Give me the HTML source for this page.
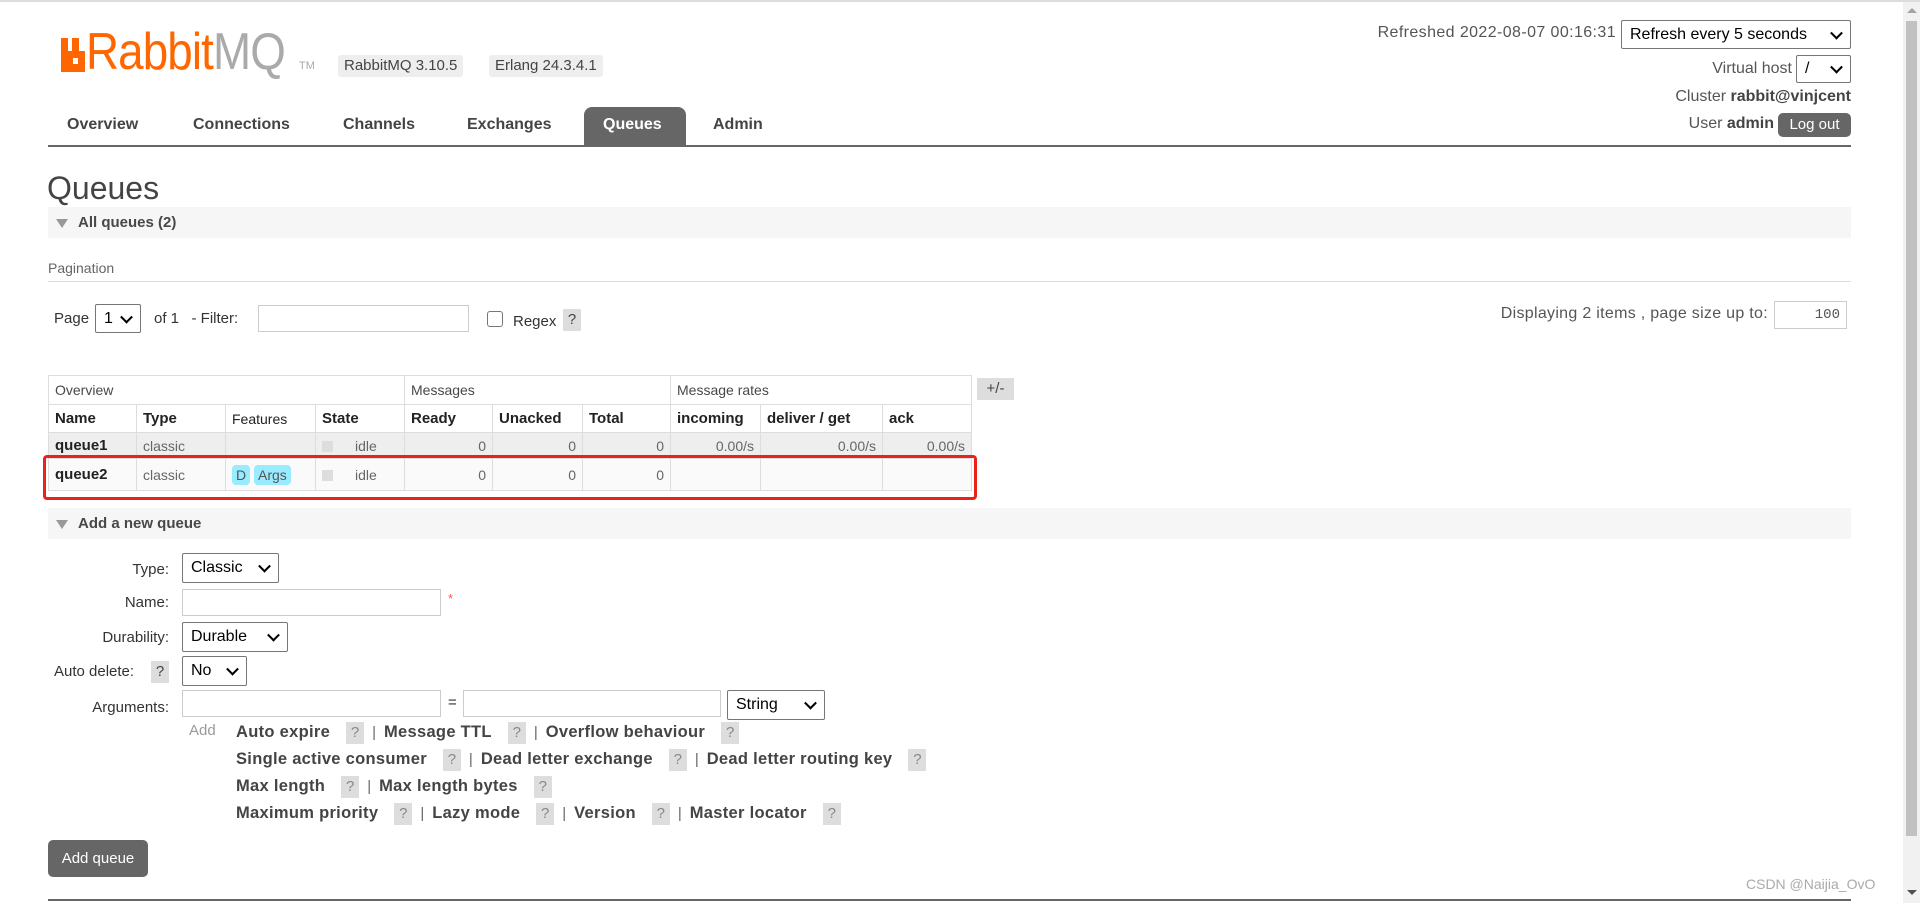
<!DOCTYPE html>
<html><head><meta charset="utf-8"><style>
*{box-sizing:border-box;margin:0;padding:0}
body{width:1920px;height:903px;overflow:hidden;background:#fff;font-family:"Liberation Sans",Arial,sans-serif;color:#484848;position:relative;font-size:15px}
.a{position:absolute;white-space:nowrap}
.sel{position:absolute;border:1px solid #767676;border-radius:2px;background:#fff;color:#000;font-size:16px;padding-left:8px;display:flex;align-items:center}
.sel:after{content:"";position:absolute;right:9px;top:50%;width:7px;height:7px;border-right:2px solid #000;border-bottom:2px solid #000;transform:translateY(-70%) rotate(45deg)}
.inp{position:absolute;border:1px solid #ccc;background:#fff}
.bar{position:absolute;left:48px;width:1803px;background:#f6f6f6;font-weight:bold;font-size:15px;color:#484848;padding-left:30px}
.bar:before{content:"";position:absolute;left:8px;top:50%;margin-top:-4px;border-left:6px solid transparent;border-right:6px solid transparent;border-top:9px solid #999}
table{position:absolute;left:48px;top:375px;border-collapse:collapse;font-size:15px}
td,th{border:1px solid #ddd;padding:0 6px;text-align:left;white-space:nowrap}
.q{position:absolute;background:#ddd;color:#888;width:18px;height:22px;text-align:center;line-height:22px;font-size:15px}
.lk{font-weight:bold;color:#444;font-size:16.5px;letter-spacing:0.3px}
.sep{color:#666;margin:0 8px}
.qi{position:static!important;display:inline-block;margin-left:16px;font-weight:normal}
</style></head><body>
<div class="a" style="left:0;top:0;width:1920px;height:2px;background:#ddd"></div>
<div class="a" style="left:1903px;top:2px;width:17px;height:901px;background:#f1f1f1"></div>
<div class="a" style="left:1906px;top:21px;width:11px;height:815px;background:#c1c1c1"></div>
<div class="a" style="left:1907px;top:8px;border-left:5px solid transparent;border-right:5px solid transparent;border-bottom:5px solid #a3a3a3"></div>
<div class="a" style="left:1907px;top:890px;border-left:5px solid transparent;border-right:5px solid transparent;border-top:5px solid #505050"></div>

<svg class="a" style="left:61px;top:38px" width="24" height="34" viewBox="0 0 24 34"><path d="M0 0h7v13h4V0h7v13h6v21H0z M12 20v6h5v-6z" fill="#f60" fill-rule="evenodd"/></svg>
<div class="a" style="left:86px;top:22px;font-size:52px;letter-spacing:-1px;color:#f60;transform:scaleX(0.88);transform-origin:0 0">Rabbit<span style="color:#aaa">MQ</span></div>
<div class="a" style="left:299px;top:60px;font-size:11px;color:#aaa">TM</div>
<div class="a" style="left:338px;top:55px;height:22px;padding:0 6px;background:#eee;border-radius:3px;font-size:15px;line-height:22px;color:#444">RabbitMQ 3.10.5</div>
<div class="a" style="left:489px;top:55px;height:22px;padding:0 6px;background:#eee;border-radius:3px;font-size:15px;line-height:22px;color:#444">Erlang 24.3.4.1</div>

<div class="a" style="left:48px;top:145px;width:1803px;height:2px;background:#666"></div>
<div class="a" style="left:584px;top:107px;width:102px;height:39px;background:#666;border-radius:8px 8px 0 0"></div>
<div class="a" style="top:116px;left:67px;font-weight:bold;font-size:16px;color:#444">Overview</div>
<div class="a" style="top:116px;left:193px;font-weight:bold;font-size:16px;color:#444">Connections</div>
<div class="a" style="top:116px;left:343px;font-weight:bold;font-size:16px;color:#444">Channels</div>
<div class="a" style="top:116px;left:467px;font-weight:bold;font-size:16px;color:#444">Exchanges</div>
<div class="a" style="top:116px;left:603px;font-weight:bold;font-size:16px;color:#fff">Queues</div>
<div class="a" style="top:116px;left:713px;font-weight:bold;font-size:16px;color:#444">Admin</div>

<div class="a" style="right:304px;top:24px;font-size:16px;letter-spacing:0.4px;color:#555">Refreshed 2022-08-07 00:16:31</div>
<div class="sel" style="left:1621px;top:20px;width:230px;height:29px">Refresh every 5 seconds</div>
<div class="a" style="right:128px;top:60px;font-size:16px;color:#555">Virtual host</div>
<div class="sel" style="left:1796px;top:55px;width:55px;height:28px">/</div>
<div class="a" style="right:69px;top:88px;font-size:16px;color:#555">Cluster <b style="color:#444">rabbit@vinjcent</b></div>
<div class="a" style="right:146px;top:115px;font-size:16px;color:#555">User <b style="color:#444">admin</b></div>
<div class="a" style="left:1778px;top:113px;width:73px;height:24px;background:#666;color:#fff;border-radius:5px;font-size:15px;text-align:center;line-height:24px">Log out</div>

<div class="a" style="left:47px;top:170px;font-size:32px;color:#444">Queues</div>
<div class="bar" style="top:207px;height:31px;line-height:31px">All queues (2)</div>

<div class="a" style="left:48px;top:260px;font-size:14px;color:#666">Pagination</div>
<div class="a" style="left:48px;top:281px;width:1803px;height:1px;background:#ddd"></div>

<div class="a" style="left:54px;top:310px;font-size:15px;color:#333">Page</div>
<div class="sel" style="left:95px;top:304px;width:46px;height:29px">1</div>
<div class="a" style="left:154px;top:310px;font-size:15px;color:#333">of 1 &nbsp;&nbsp;- Filter:</div>
<div class="inp" style="left:258px;top:305px;width:211px;height:27px"></div>
<div class="a" style="left:487px;top:311px;width:16px;height:16px;border:1px solid #767676;border-radius:3px"></div>
<div class="a" style="left:513px;top:313px;font-size:15px;color:#333">Regex</div>
<div class="q" style="left:563px;top:309px;color:#444">?</div>
<div class="a" style="right:152px;top:305px;font-size:16px;letter-spacing:0.3px;color:#555">Displaying 2 items , page size up to:</div>
<div class="inp" style="left:1774px;top:301px;width:73px;height:28px;text-align:right;padding-right:6px;font-family:'Liberation Mono',monospace;font-size:14px;line-height:26px;color:#555">100</div>

<table>
<tr style="height:29px;font-size:14px"><td colspan="4" style="width:356px">Overview</td><td colspan="3">Messages</td><td colspan="3">Message rates</td></tr>
<tr style="height:28px;font-weight:bold;color:#222"><td style="width:88px">Name</td><td style="width:89px">Type</td><td style="width:90px;font-weight:normal;font-size:14px">Features</td><td style="width:89px">State</td><td style="width:88px">Ready</td><td style="width:90px">Unacked</td><td style="width:88px">Total</td><td style="width:90px">incoming</td><td style="width:122px">deliver / get</td><td style="width:89px">ack</td></tr>
<tr style="height:26px;background:#eee;color:#666;font-size:14px"><td style="font-weight:bold;color:#222;font-size:15px">queue1</td><td>classic</td><td></td><td><span style="display:inline-block;width:11px;height:11px;background:#ddd;vertical-align:middle;margin-right:22px"></span>idle</td><td style="text-align:right">0</td><td style="text-align:right">0</td><td style="text-align:right">0</td><td style="text-align:right">0.00/s</td><td style="text-align:right">0.00/s</td><td style="text-align:right">0.00/s</td></tr>
<tr style="height:32px;background:#fafafa;color:#666;font-size:14px"><td style="font-weight:bold;color:#222;font-size:15px">queue2</td><td>classic</td><td><span style="background:#99ebff;border-radius:4px;padding:2px 4px;color:#555">D</span> <span style="background:#99ebff;border-radius:4px;padding:2px 4px;color:#555">Args</span></td><td><span style="display:inline-block;width:11px;height:11px;background:#ddd;vertical-align:middle;margin-right:22px"></span>idle</td><td style="text-align:right">0</td><td style="text-align:right">0</td><td style="text-align:right">0</td><td></td><td></td><td></td></tr>
</table>
<div class="a" style="left:977px;top:378px;width:37px;height:22px;background:#ddd;text-align:center;line-height:22px;font-size:15px;color:#444">+/-</div>
<div class="a" style="left:43px;top:455px;width:934px;height:45px;border:3px solid #e8231b;border-radius:4px"></div>

<div class="bar" style="top:508px;height:31px;line-height:31px">Add a new queue</div>

<div class="a" style="right:1751px;top:561px;font-size:15px;color:#333">Type:</div>
<div class="sel" style="left:182px;top:553px;width:97px;height:30px">Classic</div>
<div class="a" style="right:1751px;top:594px;font-size:15px;color:#333">Name:</div>
<div class="inp" style="left:182px;top:589px;width:259px;height:27px"></div>
<div class="a" style="left:448px;top:591px;color:#f55;font-size:13px">*</div>
<div class="a" style="right:1751px;top:629px;font-size:15px;color:#333">Durability:</div>
<div class="sel" style="left:182px;top:622px;width:106px;height:30px">Durable</div>
<div class="a" style="left:54px;top:663px;font-size:15px;color:#333">Auto delete:</div>
<div class="q" style="left:151px;top:661px;color:#444">?</div>
<div class="sel" style="left:182px;top:656px;width:65px;height:30px">No</div>
<div class="a" style="right:1751px;top:699px;font-size:15px;color:#333">Arguments:</div>
<div class="inp" style="left:182px;top:690px;width:259px;height:27px"></div>
<div class="a" style="left:448px;top:694px;font-size:15px;color:#333">=</div>
<div class="inp" style="left:463px;top:690px;width:258px;height:27px"></div>
<div class="sel" style="left:727px;top:690px;width:98px;height:30px">String</div>

<div class="a" style="left:189px;top:722px;font-size:15px;color:#999">Add</div>
<div class="a" style="left:236px;top:719px;font-size:15px;line-height:27px;color:#444">
<div><span class="lk">Auto expire</span><span class="q qi">?</span><span class="sep">|</span><span class="lk">Message TTL</span><span class="q qi">?</span><span class="sep">|</span><span class="lk">Overflow behaviour</span><span class="q qi">?</span></div>
<div><span class="lk">Single active consumer</span><span class="q qi">?</span><span class="sep">|</span><span class="lk">Dead letter exchange</span><span class="q qi">?</span><span class="sep">|</span><span class="lk">Dead letter routing key</span><span class="q qi">?</span></div>
<div><span class="lk">Max length</span><span class="q qi">?</span><span class="sep">|</span><span class="lk">Max length bytes</span><span class="q qi">?</span></div>
<div><span class="lk">Maximum priority</span><span class="q qi">?</span><span class="sep">|</span><span class="lk">Lazy mode</span><span class="q qi">?</span><span class="sep">|</span><span class="lk">Version</span><span class="q qi">?</span><span class="sep">|</span><span class="lk">Master locator</span><span class="q qi">?</span></div>
</div>

<div class="a" style="left:48px;top:840px;width:100px;height:37px;background:#666;color:#fff;border-radius:5px;text-align:center;line-height:37px;font-size:15px">Add queue</div>
<div class="a" style="left:48px;top:899px;width:1803px;height:2px;background:#666"></div>
<div class="a" style="left:1746px;top:876px;font-size:14px;color:#aaa">CSDN @Naijia_OvO</div>
</body></html>
